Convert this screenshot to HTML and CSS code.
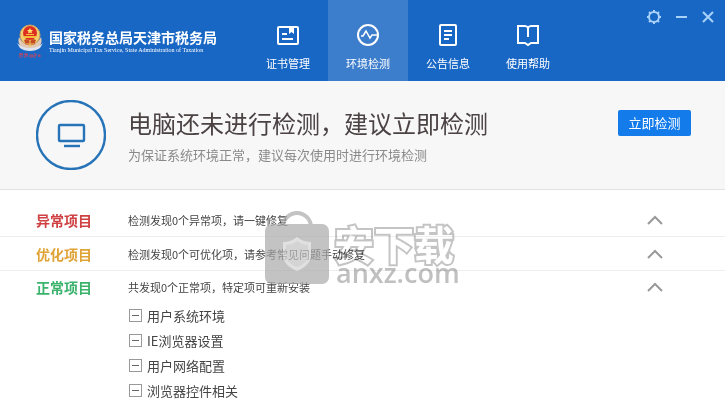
FILE: index.html
```
<!DOCTYPE html>
<html lang="zh-CN">

<head>
    <meta charset="utf-8">
    <meta name="viewport" content="width=device-width,initial-scale=1" />
    <title>环境检测</title>
    <link rel="stylesheet" href="styles.css">
</head>

<body>
    <header class="header">
        <div class="brand">
            <svg class="emblem" viewBox="0 0 28 36">
                <path d="M3 14 Q0 25 14 27 Q28 25 25 14 Q22 21 14 21 Q6 21 3 14z" fill="#e2c9b4" />
                <path d="M1 20q5 5 13 5t13-5l-3 5q-4 3-10 3t-10-3z" fill="#dfe3ec" />
                <circle cx="14" cy="12" r="10" fill="#f1cf6d" stroke="#c99a64" />
                <circle cx="14" cy="10" r="7" fill="#dc2d20" />
                <path d="M14 5l1 2h2l-1.500 1.500.5 2-2-1-2 1 .5-2L11 7h2z" fill="#ffe36a" />
                <path d="M8 13h12v2H8zM10 11h8v1h-8z" fill="#f6bd39" />
                <path d="M8 17l3-1 3 2 3-2 3 1-2 5h-8z" fill="#c64a23" />
                <path d="M14 18v6M10 21h8" stroke="#f2cb60" />
                <path d="M4 30v5M3 31h4M6 30v4M9 30v5M9 31l3 1M11 30v4M14 32h3v2h-3zM19 30v5M19 32h2M23 31v3M22 33h3" fill="none" stroke="#bd4769" />
            </svg>
            <div>
                <div class="brand-name">国家税务总局天津市税务局</div>
                <div class="brand-en">Tianjin Municipal Tax Service, State Administration of Taxation</div>
            </div>
        </div>
        <nav class="nav">
            <a href="#cert">
                <svg viewBox="0 0 24 24">
                    <rect x="2" y="4" width="20" height="17" rx="1" />
                    <path d="M6 11h5M6 16h11" />
                    <path d="M13 4h5v7l-2.500-2-2.500 2z" fill="#fff" stroke="none" />
                </svg>
                证书管理
            </a>
            <a href="#check" class="active">
                <svg viewBox="0 0 24 24">
                    <circle cx="12" cy="12" r="10" />
                    <path d="M5 13h2l3-5 4 7 2-3h5" stroke-width="1.500" />
                </svg>
                环境检测
            </a>
            <a href="#notice">
                <svg viewBox="0 0 24 24">
                    <rect x="4" y="2" width="16" height="20" rx="1" />
                    <path d="M8 8h8M8 12h8M8 16h5" />
                </svg>
                公告信息
            </a>
            <a href="#help">
                <svg viewBox="0 0 24 24">
                    <path d="M12 5q-1-2-3-2H2v17h7l3 2 3-2h7V3h-7q-2 0-3 2v9" />
                </svg>
                使用帮助
            </a>
        </nav>
        <div class="window-tools">
            <button aria-label="设置">
                <svg viewBox="0 0 16 16">
                    <circle cx="8" cy="8" r="5" />
                    <path d="M8 1v2M8 13v2M1 8h2M13 8h2M3 3l1.500 1.500M11.500 11.500L13 13M3 13l1.500-1.500M11.500 4.500L13 3" />
                </svg>
            </button>
            <button aria-label="最小化">
                <svg viewBox="0 0 16 16"><path d="M3 8h11" /></svg>
            </button>
            <button aria-label="关闭">
                <svg viewBox="0 0 16 16"><path d="M3 3l10 10M13 3L3 13" /></svg>
            </button>
        </div>
    </header>

    <section class="hero">
        <svg class="status" viewBox="0 0 70 70">
            <circle cx="35" cy="35" r="34" />
            <rect x="23" y="25" width="25" height="16" rx="1" />
            <path d="M28 46h16" />
        </svg>
        <div class="hero-text">
            <h1>电脑还未进行检测，建议立即检测</h1>
            <p>为保证系统环境正常，建议每次使用时进行环境检测</p>
        </div>
        <button class="check">立即检测</button>
    </section>

    <main class="results">
        <div class="row">
            <h2 class="red">异常项目</h2>
            <p>检测发现0个异常项，请一键修复</p>
            <button aria-label="收起异常项目"><svg viewBox="0 0 16 10"><path d="M1 9l7-7 7 7" /></svg></button>
        </div>
        <div class="row">
            <h2 class="yellow">优化项目</h2>
            <p>检测发现0个可优化项，请参考常见问题手动修复</p>
            <button aria-label="收起优化项目"><svg viewBox="0 0 16 10"><path d="M1 9l7-7 7 7" /></svg></button>
        </div>
        <div class="row">
            <h2 class="green">正常项目</h2>
            <p>共发现0个正常项，特定项可重新安装</p>
            <button aria-label="收起正常项目"><svg viewBox="0 0 16 10"><path d="M1 9l7-7 7 7" /></svg></button>
        </div>
        <ul class="items">
            <li><button aria-label="折叠"></button>用户系统环境</li>
            <li><button aria-label="折叠"></button>IE浏览器设置</li>
            <li><button aria-label="折叠"></button>用户网络配置</li>
            <li><button aria-label="折叠"></button>浏览器控件相关</li>
        </ul>

        <div class="watermark">
            <svg viewBox="0 0 64 74">
                <path d="M18 16a14 14 0 0 1 28 0" fill="none" stroke="#aaa" stroke-width="4" />
                <rect x="0" y="13" width="64" height="60" rx="7" fill="#aaa" />
                <path d="M32 26q6 5 14 5v13q0 10-14 16-14-6-14-16V31q8 0 14-5z" fill="#d4d4d4" />
                <path d="M32 30q5 4 11 4v10q0 8-11 12-11-4-11-12V34q6 0 11-4z" fill="#c2c2c2" />
            </svg>
            <div>
                <div class="mark-cn">安下载</div>
                <div class="mark-en">anxz.com</div>
            </div>
        </div>
    </main>
</body>

</html>
```
FILE: styles.css
```
* {
    box-sizing: border-box;
}

body {
    margin: 0;
    min-height: 100vh;
    overflow: hidden;
    background: #fff;
    color: #444;
    font-family: "Noto Sans CJK SC", sans-serif;
    font-size: 11px;
}

h1,
h2,
p,
ul {
    margin: 0;
    padding: 0;
    font-weight: normal;
}

button {
    border: 0;
    padding: 0;
    background: none;
    font-family: inherit;
    cursor: pointer;
}

svg {
    display: block;
    flex: none;
}

.header {
    display: flex;
    height: 81px;
    background: #1967c4;
    color: #fff;
}

.brand {
    display: flex;
    align-items: center;
    gap: 5px;
    width: 248px;
    padding-left: 16px;
}

.emblem {
    width: 28px;
    height: 36px;
}

.brand-name {
    font-size: 14px;
    font-weight: bold;
    line-height: 18px;
}

.brand-en {
    font-family: "Liberation Serif", serif;
    font-size: 6px;
    line-height: 8px;
    white-space: nowrap;
}

.nav {
    display: flex;
}

.nav a {
    display: flex;
    flex-direction: column;
    align-items: center;
    gap: 8px;
    width: 80px;
    padding-top: 23px;
    color: #fff;
    line-height: 16px;
    text-decoration: none;
}

.nav .active {
    background: #3c7dcc;
}

.nav svg {
    width: 24px;
    height: 24px;
    fill: none;
    stroke: #fff;
    stroke-width: 2;
}

.window-tools {
    display: flex;
    align-items: flex-start;
    gap: 11px;
    margin-left: auto;
    padding: 9px 9px 0 0;
}

.window-tools svg {
    width: 16px;
    height: 16px;
    fill: none;
    stroke: #a9d2fa;
    stroke-width: 2;
}

.hero {
    display: flex;
    align-items: center;
    height: 109px;
    padding: 0 34px 0 36px;
    border-bottom: 1px solid #e2e2e2;
    background: #f7f7f7;
}

.status {
    width: 70px;
    height: 70px;
    fill: none;
    stroke: #2673b8;
    stroke-width: 2.4;
}

.hero-text {
    flex: 1;
    padding-left: 22px;
}

.hero h1 {
    color: #4b4244;
    font-size: 24px;
    line-height: 36px;
}

.hero p {
    padding-top: 4px;
    color: #8a8a8a;
    font-size: 13px;
    line-height: 20px;
}

.check {
    align-self: flex-start;
    width: 73px;
    height: 26px;
    margin-top: 29px;
    border-radius: 2px;
    background: #137bea;
    color: #fff;
    font-size: 13px;
    line-height: 26px;
}

.results {
    position: relative;
    padding-top: 13px;
}

.row {
    display: flex;
    align-items: center;
    height: 34px;
    padding: 0 62px 0 36px;
    border-bottom: 1px solid #eee;
}

.row:nth-child(3) {
    height: 32px;
    border-bottom: 0;
}

.row h2 {
    width: 92px;
    font-size: 14px;
    font-weight: bold;
    line-height: 20px;
}

.row p {
    flex: 1;
}

.row svg {
    width: 16px;
    height: 10px;
    fill: none;
    stroke: #999;
    stroke-width: 2;
}

.red {
    color: #cf4142;
}

.yellow {
    color: #dfa336;
}

.green {
    color: #3bb36c;
}

.items {
    padding-left: 129px;
    list-style: none;
    font-size: 13px;
    line-height: 25px;
}

.items li {
    display: flex;
    align-items: center;
    gap: 5px;
}

.items button {
    display: flex;
    align-items: center;
    justify-content: center;
    width: 13px;
    height: 13px;
    border: 1px solid #999;
}

.items button::before {
    width: 7px;
    height: 1px;
    background: #666;
    content: "";
}

/* site mark laid over the rows, the text below stays readable */
.watermark {
    position: absolute;
    top: 21px;
    left: 265px;
    display: flex;
    gap: 4px;
    pointer-events: none;
}

.watermark svg {
    width: 64px;
    height: 74px;
    opacity: 0.7;
    overflow: visible;
}

.mark-cn,
.mark-en {
    mix-blend-mode: multiply;
}

.mark-cn {
    padding: 12px 0 0 1px;
    color: #fff;
    font-size: 40px;
    font-weight: bold;
    line-height: 40px;
    -webkit-text-stroke: 4px #c4c4c4;
    paint-order: stroke fill;
}

.mark-en {
    padding-left: 3px;
    color: #c0c0c0;
    font-family: "Open Sans", sans-serif;
    font-size: 27px;
    font-weight: 600;
    line-height: 20px;
}
```
